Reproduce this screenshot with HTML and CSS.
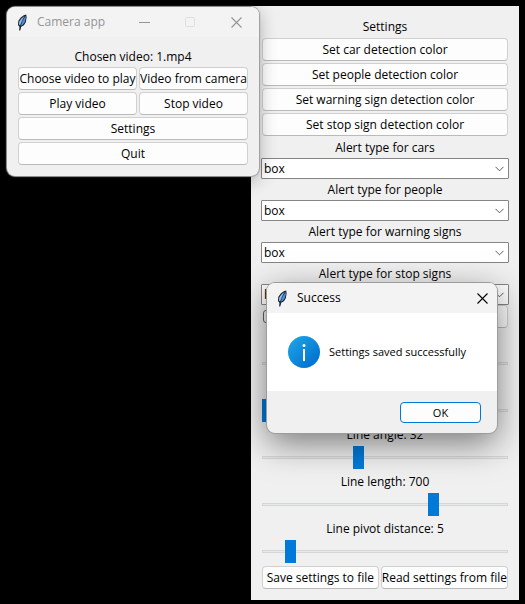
FILE: index.html
```html
<!DOCTYPE html>
<html lang="en">
<head>
<meta charset="utf-8">
<title>Camera app</title>
<link rel="stylesheet" href="styles.css">
</head>
<body>
<svg class="symbols" aria-hidden="true">
  <symbol id="feather" viewBox="0 0 10 17">
    <path d="M2.2 16.5 2.6 13 1 11 1.4 6.8 3.8 3.6 6.8 1.2 9.2.5 9.6 3.5 8.8 8.2 6.9 11.3 4.2 12.8 3.2 16.5Z" fill="#14171d"/>
    <path d="M8.7 1.6 8.8 4.5 7.6 8.5 5.6 11 3.7 11.8 5 7.4Z" fill="#4b8fdc"/>
    <path d="M7.6 1.8 4.4 4.4 2.3 7.3 1.9 10.4 3.2 11.4 5.2 6.8Z" fill="#8fc0f0"/>
    <path d="M7.8 2.2 5.2 6.8 3.3 11.8 2.5 16" fill="none" stroke="#26405e" stroke-width=".6"/>
  </symbol>
  <symbol id="chevron" viewBox="0 0 9 6"><path d="M.5.8 4.5 4.8 8.5.8" fill="none" stroke="#5c5c5c"/></symbol>
  <symbol id="close" viewBox="0 0 11 11"><path d="M.5.5 10.5 10.5M10.5.5.5 10.5" fill="none" stroke="currentColor" stroke-width="1.1"/></symbol>
</svg>

<main class="desktop">
  <section class="window settings" aria-label="Settings">
    <h2 class="label heading">Settings</h2>
    <div class="stack">
      <button class="button">Set car detection color</button>
      <button class="button">Set people detection color</button>
      <button class="button">Set warning sign detection color</button>
      <button class="button">Set stop sign detection color</button>
    </div>
    <div class="alerts">
      <label class="label" for="cars">Alert type for cars</label>
      <div class="combo"><select id="cars"><option>box</option></select><svg><use href="#chevron"/></svg></div>
      <label class="label" for="people">Alert type for people</label>
      <div class="combo"><select id="people"><option>box</option></select><svg><use href="#chevron"/></svg></div>
      <label class="label" for="warning">Alert type for warning signs</label>
      <div class="combo"><select id="warning"><option>box</option></select><svg><use href="#chevron"/></svg></div>
      <label class="label" for="stop">Alert type for stop signs</label>
      <div class="combo"><select id="stop"><option>box</option></select><svg><use href="#chevron"/></svg></div>
    </div>
    <div class="option-row">
      <input class="check" type="checkbox" aria-label="Show line">
      <button class="button" aria-label="Set line color"></button>
    </div>
    <div class="scales">
      <div class="scale"><span class="label"></span><input type="range" aria-label="Line position" min="0" max="100" value="50"></div>
      <div class="scale"><span class="label"></span><input type="range" aria-label="Line offset" min="0" max="100" value="0"></div>
      <div class="scale"><label class="label" for="angle">Line angle: 32</label><input id="angle" type="range" min="0" max="82" value="32"></div>
      <div class="scale"><label class="label" for="length">Line length: 700</label><input id="length" type="range" min="0" max="982" value="700"></div>
      <div class="scale"><label class="label" for="pivot">Line pivot distance: 5</label><input id="pivot" type="range" min="0" max="51" value="5"></div>
    </div>
    <div class="files">
      <button class="button">Save settings to file</button>
      <button class="button">Read settings from file</button>
    </div>
  </section>

  <section class="window camera" aria-label="Camera app">
    <header class="titlebar">
      <svg class="feather"><use href="#feather"/></svg>
      <h1 class="title">Camera app</h1>
      <div class="controls">
        <button class="control" aria-label="Minimize"><svg viewBox="0 0 11 11"><path d="M0 5.5H11" stroke="currentColor"/></svg></button>
        <button class="control" aria-label="Maximize" disabled><svg viewBox="0 0 11 11"><rect x=".5" y=".5" width="9" height="9" rx="1" fill="none" stroke="currentColor"/></svg></button>
        <button class="control" aria-label="Close"><svg><use href="#close"/></svg></button>
      </div>
    </header>
    <div class="camera-body">
      <p class="label">Chosen video: 1.mp4</p>
      <div class="camera-grid">
        <button class="button">Choose video to play</button>
        <button class="button">Video from camera</button>
        <button class="button">Play video</button>
        <button class="button">Stop video</button>
        <button class="button wide">Settings</button>
        <button class="button wide">Quit</button>
      </div>
    </div>
  </section>

  <section class="window dialog" role="dialog" aria-label="Success">
    <header class="titlebar">
      <svg class="feather"><use href="#feather"/></svg>
      <h2 class="title">Success</h2>
      <button class="control" aria-label="Close"><svg><use href="#close"/></svg></button>
    </header>
    <div class="message">
      <svg class="info" viewBox="0 0 32 32" aria-hidden="true">
        <defs><linearGradient id="blue" x1="0" y1="0" x2="1" y2="1"><stop offset=".1" stop-color="#1ea2e4"/><stop offset=".9" stop-color="#006fd0"/></linearGradient></defs>
        <circle cx="16" cy="16" r="16" fill="url(#blue)"/>
        <circle cx="16" cy="9.5" r="1.5" fill="#fff"/>
        <path d="M16 13V25" stroke="#fff" stroke-width="2"/>
      </svg>
      <p>Settings saved successfully</p>
    </div>
    <footer class="actions"><button class="button primary">OK</button></footer>
  </section>
</main>
</body>
</html>
```
FILE: styles.css
```css
* { box-sizing: border-box; }

body {
  margin: 0;
  background: #000;
  color: #000;
  font: 12px/16px "Open Sans", "Noto Sans", sans-serif;
}

h1, h2, p { margin: 0; font: inherit; }

button, select, input { margin: 0; font: inherit; color: inherit; }

.symbols { position: absolute; width: 0; height: 0; }

.desktop { position: relative; min-height: 100vh; overflow: hidden; }

.window { position: absolute; background: #f0f0f0; }

.label { display: block; text-align: center; white-space: nowrap; }

.button {
  height: 23px;
  padding: 0;
  border: 1px solid #d0d0d0;
  border-bottom-color: #bababa;
  border-radius: 4px;
  background: #fdfdfd;
  text-align: center;
  white-space: nowrap;
}

/* Settings window */
.settings { left: 251px; top: 6px; width: 268px; padding: 13px 11px 11px; }
.heading { height: 19px; }
.stack { display: grid; gap: 2px; }
.alerts { margin: 1px -1px 0; }
.alerts .label { height: 21px; padding-top: 3px; }

.combo { display: grid; align-items: center; }
.combo select {
  grid-area: 1 / 1;
  width: 100%;
  height: 21px;
  padding: 0 20px 0 2px;
  border: 1px solid #858585;
  border-radius: 1px;
  background: #fff;
  appearance: none;
}
.combo svg {
  grid-area: 1 / 1;
  justify-self: end;
  width: 9px;
  height: 6px;
  margin-right: 5px;
  pointer-events: none;
}

.option-row { display: grid; grid-template-columns: 118fr 126fr; gap: 2px; align-items: center; }
.check {
  width: 13px;
  height: 13px;
  margin-left: 1px;
  border: 1px solid #626262;
  border-radius: 3px;
  background: #f5f5f5;
  appearance: none;
}

.scale .label { height: 24px; padding-top: 5px; }
.scale input {
  display: block;
  width: 100%;
  height: 23px;
  background: transparent;
  appearance: none;
}
.scale input::-webkit-slider-runnable-track {
  height: 3px;
  border: 1px solid #d6d6d6;
  background: #e7eaea;
}
.scale input::-webkit-slider-thumb {
  width: 11px;
  height: 23px;
  margin: -11px -1px 0;
  background: #007ad9;
  appearance: none;
}

.files { display: grid; grid-template-columns: 118fr 126fr; gap: 2px; margin-top: 3px; }

/* Title bars */
.titlebar { display: flex; align-items: center; height: 30px; background: #f3f3f3; }
.feather { width: 10px; height: 17px; margin: 0 10px; }
.title { flex: 1; }
.control { display: grid; place-items: center; height: 28px; padding: 0; border: 0; background: none; }
.control svg { width: 11px; height: 11px; }

/* Camera window */
.camera {
  left: 7px;
  top: 7px;
  width: 252px;
  border-radius: 8px;
  box-shadow: 0 0 1px 1px #9c9c9c, 0 4px 18px rgba(0, 0, 0, .3);
}
.camera .titlebar { border-radius: 8px 8px 0 0; color: #959595; }
.controls { display: flex; }
.controls .control { width: 46px; }
.control:disabled { color: #dedede; }
.camera-body { padding: 12px 11px 11px; }
.camera-body .label { height: 18px; }
.camera-grid { display: grid; grid-template-columns: 119fr 109fr; gap: 2px; }
.wide { grid-column: 1 / -1; }

/* Success dialog */
.dialog {
  left: 267px;
  top: 283px;
  width: 230px;
  border-radius: 8px;
  box-shadow: 0 0 0 1px #9c9c9c, 0 10px 34px rgba(0, 0, 0, .5);
}
.dialog .titlebar { border-radius: 8px 8px 0 0; }
.dialog .control { width: 30px; }
.message {
  display: flex;
  align-items: center;
  gap: 9px;
  height: 78px;
  padding: 0 21px;
  background: #fff;
  font-size: 11px;
  white-space: nowrap;
}
.info { width: 32px; height: 32px; }
.actions { display: flex; justify-content: flex-end; padding: 11px 16px 10px; font-size: 11px; }
.primary { width: 81px; height: 21px; border-color: #0078d4; }
```
